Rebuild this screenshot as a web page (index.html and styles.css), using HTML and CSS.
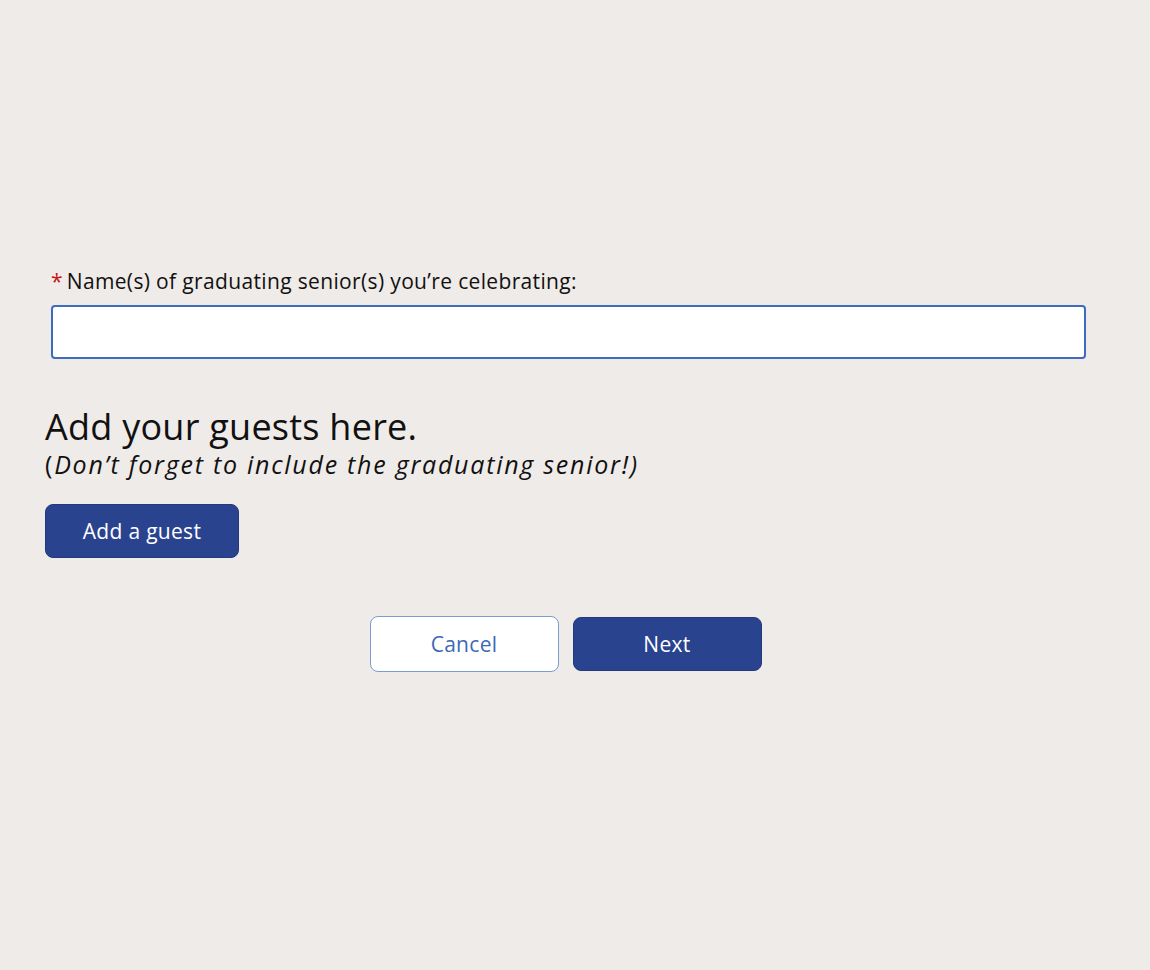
FILE: index.html
```html
<!DOCTYPE html>
<html lang="en">
<head>
<meta charset="utf-8">
<link rel="stylesheet" href="styles.css">
</head>
<body>
<main class="form">
  <div class="field">
    <label class="label" for="seniors"><span class="req">*</span> Name(s) of graduating senior(s) you’re celebrating:</label>
    <input class="input" id="seniors" type="text">
  </div>
  <section class="guests">
    <h2 class="guests-title">Add your guests here.</h2>
    <p class="guests-note">(<em>Don’t forget to include the graduating senior!)</em></p>
    <button class="btn btn-primary btn-add" type="button">Add a guest</button>
  </section>
  <div class="actions">
    <button class="btn btn-outline" type="button">Cancel</button>
    <button class="btn btn-primary btn-next" type="button">Next</button>
  </div>
</main>
</body>
</html>
```

FILE: styles.css
```css
html, body {
  margin: 0;
  padding: 0;
  background: #efebe8;
}
body {
  font-family: "Open Sans", Lato, sans-serif;
  color: #111;
}
.form {
  padding: 268px 0 0 45px;
  width: 1040px;
}
.field {
  padding-left: 6px;
}
.label {
  display: block;
  font-size: 21px;
  line-height: 26px;
  letter-spacing: 0.35px;
  color: #111;
}
.req {
  color: #c4161c;
  margin-right: -2px;
}
.input {
  display: block;
  box-sizing: border-box;
  margin-top: 11px;
  width: 1035px;
  height: 54px;
  border: 2px solid #3d6bbf;
  border-radius: 4px;
  background: #fff;
  outline: none;
}
.guests {
  margin-top: 47px;
}
.guests-title {
  margin: 0;
  font-weight: 400;
  font-size: 36px;
  line-height: 42px;
  letter-spacing: 0.25px;
}
.guests-note {
  margin: 0;
  font-size: 25px;
  line-height: 32px;
  letter-spacing: 1.75px;
}
.guests-note em {
  font-style: italic;
}
.btn {
  font-family: inherit;
  font-size: 21px;
  letter-spacing: 0.3px;
  box-sizing: border-box;
  cursor: pointer;
}
.btn-primary {
  background: #2a438f;
  color: #fff;
  border: 1px solid #22397e;
}
.btn-add {
  margin-top: 24px;
  width: 194px;
  height: 54px;
  border-radius: 8px;
}
.actions {
  display: flex;
  justify-content: center;
  gap: 14px;
  margin-top: 58px;
  width: 1041px;
}
.btn-outline {
  width: 189px;
  height: 56px;
  border-radius: 8px;
  background: #fff;
  color: #3d68b5;
  border: 1px solid #7b9bd6;
}
.btn-next {
  width: 189px;
  height: 54px;
  margin-top: 1px;
  border-radius: 8px;
}
```
